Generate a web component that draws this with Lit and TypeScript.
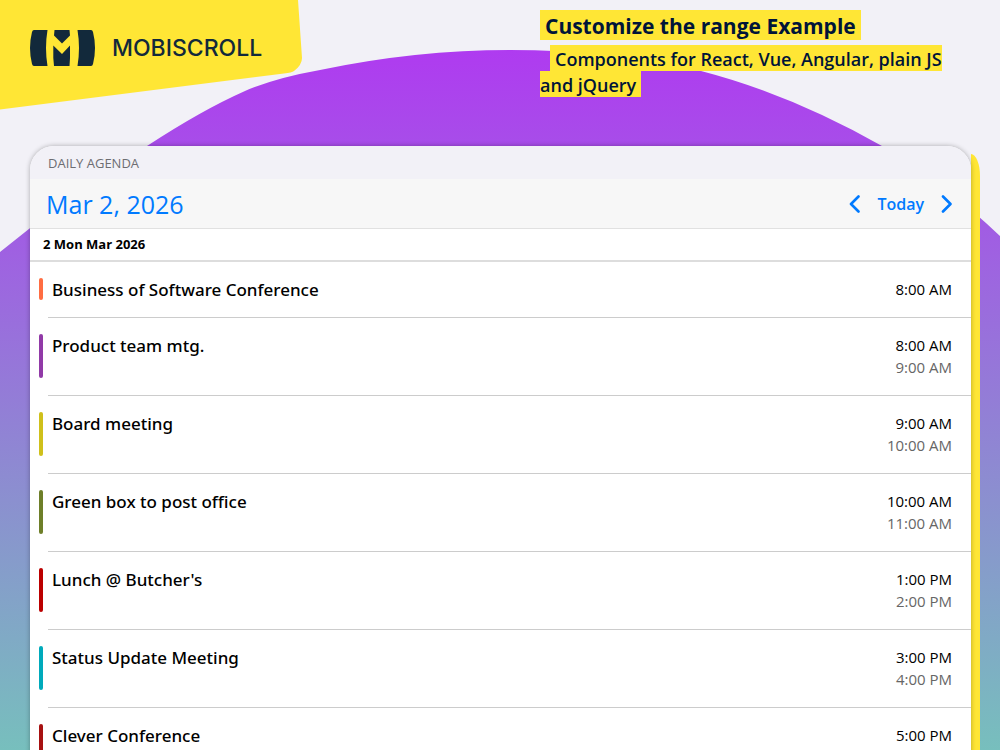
import { LitElement, html, css, svg } from "lit";
import { customElement, property, state } from "lit/decorators.js";
import { styleMap } from "lit/directives/style-map.js";

interface AgendaEvent {
  title: string;
  start: string;
  end?: string;
  color: string;
}

const EVENTS: AgendaEvent[] = [
  { title: "Business of Software Conference", start: "8:00 AM", color: "#ff6d42" },
  { title: "Product team mtg.", start: "8:00 AM", end: "9:00 AM", color: "#913aa7" },
  { title: "Board meeting", start: "9:00 AM", end: "10:00 AM", color: "#cfc01b" },
  { title: "Green box to post office", start: "10:00 AM", end: "11:00 AM", color: "#6e7f29" },
  { title: "Lunch @ Butcher's", start: "1:00 PM", end: "2:00 PM", color: "#bb0000" },
  { title: "Status Update Meeting", start: "3:00 PM", end: "4:00 PM", color: "#00aabb" },
  { title: "Clever Conference", start: "5:00 PM", end: "", color: "#a71111" },
];

@customElement("brand-logo")
export class BrandLogo extends LitElement {
  static styles = css`
    :host { display: block; position: relative; width: 302px; height: 110px; }
    .plate { position: absolute; inset: 0; }
    .link {
      position: relative;
      display: flex;
      align-items: center;
      gap: 17px;
      padding: 30px 0 0 30px;
      color: #12293b;
      text-decoration: none;
      font: 500 23px/36px Inter, sans-serif;
    }
  `;

  render() {
    return html`
      <svg class="plate" viewBox="0 0 302 110" width="302" height="110" aria-hidden="true">
        <path fill="#ffe635" d="M0 0H298L302 58Q302 65 294 71Q292 72.500 284 73.500L0 109.500Z" />
      </svg>
      <a class="link" href="#">
        <svg width="65" height="36" viewBox="0 0 65 36" fill="#12293b" aria-hidden="true">
          <path d="M4 0H17.500Q14.500 18 17.500 36H4Q2.500 36 2 34Q-2 18 2 2Q2.500 0 4 0Z" />
          <path d="M61 0H47.500Q50.500 18 47.500 36H61Q62.500 36 63 34Q67 18 63 2Q62.500 0 61 0Z" />
          <path d="M24.500 0H39.500L40 5.500L32 13.500L24 5.500Z" />
          <path d="M23.300 15.500L32 24L40 15.500V28L39.500 36H24L23.300 28Z" />
        </svg>
        <span>MOBISCROLL</span>
      </a>
    `;
  }
}

@customElement("agenda-row")
export class AgendaRow extends LitElement {
  @property({ attribute: false }) event!: AgendaEvent;

  static styles = css`
    :host { display: flex; padding-left: 9px; }
    .bar { flex: none; width: 4px; margin: 16px 5px 18px 0; border-radius: 2px; }
    .body {
      flex: 1;
      display: flex;
      justify-content: space-between;
      padding: 16px 19px 17px 4px;
      border-bottom: 1px solid #ccc;
    }
    .title { padding-top: 1px; font-family: "Segoe UI", "Noto Sans", sans-serif; font-size: 17px; line-height: 21px; font-weight: 500; }
    .times { display: flex; flex-direction: column; text-align: right; font-size: 15px; line-height: 22px; }
    .end { color: #666; min-height: 22px; }
  `;

  render() {
    const e = this.event;
    return html`
      <span class="bar" style=${styleMap({ background: e.color })}></span>
      <div class="body">
        <span class="title">${e.title}</span>
        <div class="times">
          <time>${e.start}</time>
          ${e.end !== undefined ? html`<time class="end">${e.end}</time>` : null}
        </div>
      </div>
    `;
  }
}

@customElement("app-root")
export class AppRoot extends LitElement {
  @state() private day = new Date(2026, 2, 2);

  static styles = css`
    :host {
      display: block;
      position: relative;
      height: 100vh;
      overflow: hidden;
      background: #f2f1f7;
      color: #000;
      font-family: "Segoe UI", "Open Sans", sans-serif;
    }
    .backdrop { position: absolute; inset: 0; width: 100%; height: 100%; }
    .page { position: relative; }
    .top { display: grid; grid-template-columns: 1fr 1fr; height: 146px; }
    .intro { padding: 10px 40px 0; color: #001439; }
    h1, h2 { margin: 0; }
    h1 { font-size: 21px; line-height: 28px; font-weight: 700; margin-bottom: 6px; }
    h2 { font-size: 18px; line-height: 26px; font-weight: 600; }
    .mark { background: #ffe635; padding: 2px 5px 0; }
    h1 .mark { display: inline-block; }
    h2 .mark { margin-left: 10px; }
    .stage { display: flex; padding: 0 20px 0 30px; }
    .stage::after {
      content: "";
      width: 9px;
      margin-top: 8px;
      border-top-right-radius: 9px 22px;
      background: #ffe635;
    }
    .card {
      flex: 1;
      z-index: 1;
      border-radius: 24px 24px 0 0;
      background: #fff;
      box-shadow: 0 0 5px rgba(0, 0, 0, 0.3);
    }
    .label {
      padding: 1px 18px 0;
      border-radius: 24px 24px 0 0;
      background: #f2f1f7;
      color: #6d6d72;
      font-size: 13px;
      line-height: 32px;
      text-transform: uppercase;
    }
    .toolbar {
      display: flex;
      align-items: center;
      height: 49px;
      padding: 0 10px 0 16px;
      background: #f7f7f7;
      border-bottom: 1px solid #e1e1e1;
      box-sizing: content-box;
    }
    button { border: 0; padding: 0; background: none; color: #007aff; font-family: inherit; cursor: pointer; }
    .date { margin-right: auto; font-size: 25px; line-height: 48px; }
    .today { padding: 0 9px 0 8px; font-size: 16px; line-height: 48px; font-weight: 600; }
    .arrow { display: flex; justify-content: center; width: 28px; }
    .day { padding: 0 13px; border-bottom: 2px solid #ddd; font-size: 13px; line-height: 31px; font-weight: 700; }
    ul { list-style: none; margin: 0; padding: 0; }
  `;

  private move(days: number) {
    const d = this.day;
    this.day = new Date(d.getFullYear(), d.getMonth(), d.getDate() + days);
  }

  private arrow(path: string) {
    return html`<svg width="12" height="18" viewBox="0 0 12 18" fill="none" stroke="#007aff" stroke-width="2.600" stroke-linecap="round" stroke-linejoin="round" aria-hidden="true">
      ${svg`<path d=${path} />`}
    </svg>`;
  }

  render() {
    const month = this.day.toLocaleString("en-US", { month: "short" });
    const weekday = this.day.toLocaleString("en-US", { weekday: "short" });
    const date = this.day.getDate();
    const year = this.day.getFullYear();
    return html`
      <svg class="backdrop" viewBox="0 0 1000 750" preserveAspectRatio="none" aria-hidden="true">
        <defs>
          <linearGradient id="fade" gradientUnits="userSpaceOnUse" x1="0" y1="50" x2="0" y2="750">
            <stop offset="0" stop-color="#af3bf0" />
            <stop offset="1" stop-color="#77bfbd" />
          </linearGradient>
        </defs>
        <path fill="url(#fade)" d="M0 252Q68 196 147 146Q202 110 245 91Q275 78 320 70Q415 50 510 50Q610 50 701 71Q790 94 882 146Q942 181 1000 236V750H0Z" />
      </svg>
      <div class="page">
        <header class="top">
          <brand-logo></brand-logo>
          <div class="intro">
            <h1><span class="mark">Customize the range Example</span></h1>
            <h2><span class="mark">Components for React, Vue, Angular, plain JS and jQuery</span></h2>
          </div>
        </header>
        <div class="stage">
          <main class="card">
            <div class="label">Daily agenda</div>
            <div class="toolbar">
              <button class="date">${month} ${date}, ${year}</button>
              <button class="arrow" aria-label="Previous day" @click=${() => this.move(-1)}>${this.arrow("M9.500 1.500L2 9L9.500 16.500")}</button>
              <button class="today" @click=${() => (this.day = new Date(2026, 2, 2))}>Today</button>
              <button class="arrow" aria-label="Next day" @click=${() => this.move(1)}>${this.arrow("M2 1.500L9.500 9L2 16.500")}</button>
            </div>
            <div class="day">${date} ${weekday} ${month} ${year}</div>
            <ul>
              ${EVENTS.map((e) => html`<li><agenda-row .event=${e}></agenda-row></li>`)}
            </ul>
          </main>
        </div>
      </div>
    `;
  }
}
